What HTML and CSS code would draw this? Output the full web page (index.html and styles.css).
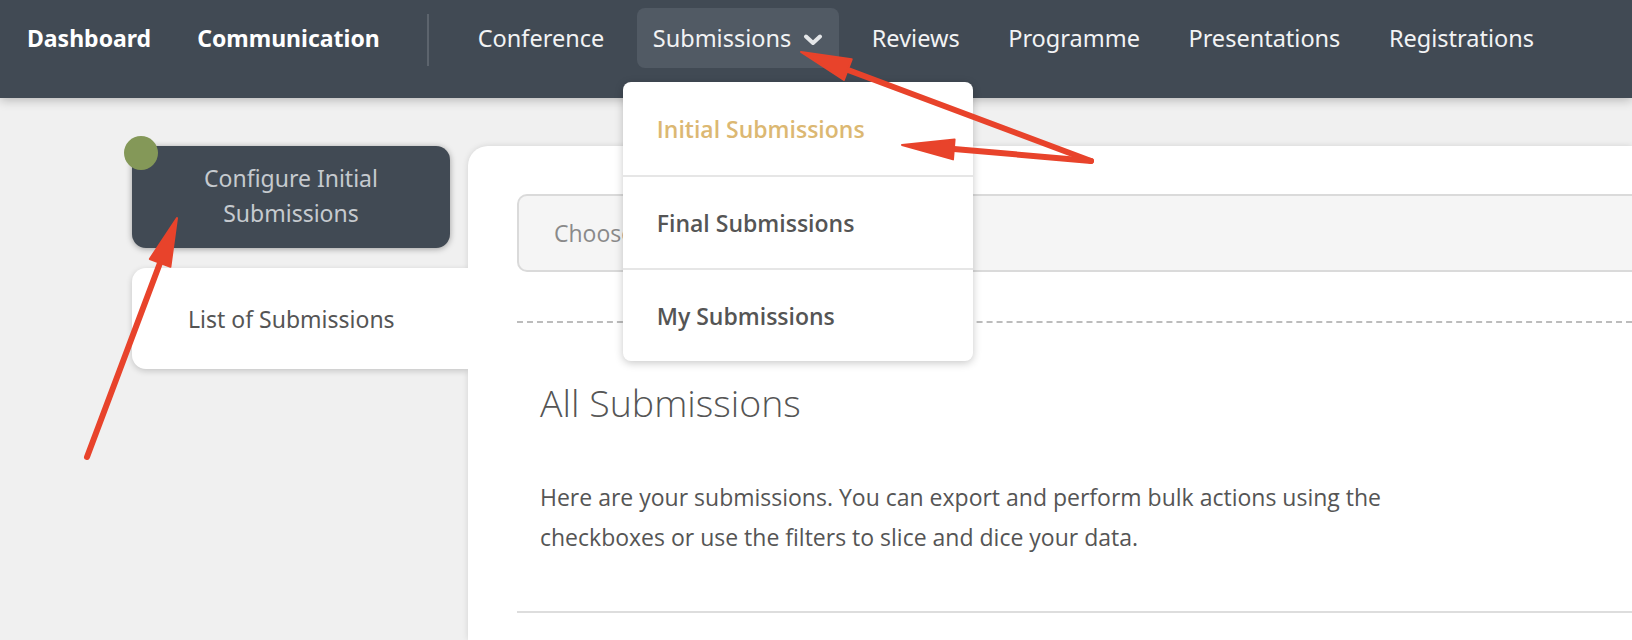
FILE: index.html
```html
<!DOCTYPE html>
<html lang="en">
<head>
<meta charset="utf-8">
<title>Submissions</title>
<link rel="stylesheet" href="styles.css">
</head>
<body>
<header class="topbar">
  <nav class="nav-primary">
    <a class="nav-strong">Dashboard</a>
    <a class="nav-strong">Communication</a>
  </nav>
  <span class="nav-divider"></span>
  <nav class="nav-secondary">
    <a class="nav-item">Conference</a>
    <div class="nav-item nav-item-open">
      <span>Submissions</span>
      <svg class="chevron" width="20" height="12" viewBox="0 0 20 12"><polyline points="3,2.5 10,9 17,2.5" fill="none" stroke="#e4e6e8" stroke-width="4" stroke-linecap="round" stroke-linejoin="round"/></svg>
      <ul class="dropdown">
        <li class="dropdown-item dropdown-item-active">Initial Submissions</li>
        <li class="dropdown-item">Final Submissions</li>
        <li class="dropdown-item">My Submissions</li>
      </ul>
    </div>
    <a class="nav-item">Reviews</a>
    <a class="nav-item">Programme</a>
    <a class="nav-item">Presentations</a>
    <a class="nav-item">Registrations</a>
  </nav>
</header>

<div class="layout">
  <aside class="sidebar">
    <div class="config-card">
      <span class="status-dot"></span>
      Configure Initial<br>Submissions
    </div>
    <div class="list-card">List of Submissions</div>
  </aside>
  <main class="panel">
    <div class="select-box">Choose a form</div>
    <div class="dashed-rule"></div>
    <section class="intro">
      <h2 class="intro-title">All Submissions</h2>
      <p class="intro-text">Here are your submissions. You can export and perform bulk actions using the checkboxes or use the filters to slice and dice your data.</p>
    </section>
    <div class="solid-rule"></div>
  </main>
</div>

<svg class="annotations" width="1632" height="640" viewBox="0 0 1632 640">
  <g stroke="#e8432b" stroke-width="6" stroke-linecap="round" fill="none">
    <line x1="87" y1="457" x2="160" y2="263"/>
    <line x1="1091" y1="161" x2="848" y2="70"/>
    <line x1="1091" y1="161" x2="954" y2="149"/>
  </g>
  <g fill="#e8432b" stroke="#e8432b" stroke-width="2" stroke-linejoin="round">
    <polygon points="177,218 170.4,266.8 149.8,259"/>
    <polygon points="801,52 843.9,79.9 851.7,59.3"/>
    <polygon points="902,145 953,159.4 954.6,139.4"/>
  </g>
</svg>
</body>
</html>
```

FILE: styles.css
```css
* { box-sizing: border-box; }

html, body {
  margin: 0;
  padding: 0;
}

body {
  width: 1632px;
  height: 640px;
  overflow: hidden;
  background: #f0f0f0;
  font-family: "Open Sans", "Noto Sans", sans-serif;
  position: relative;
}

.topbar {
  height: 98px;
  background: #414a54;
  display: flex;
  align-items: flex-start;
  padding: 8px 0 0 27px;
  box-shadow: 0 2px 10px rgba(0, 0, 0, 0.25);
  position: relative;
  z-index: 5;
  font-family: "Noto Sans", "Open Sans", sans-serif;
}

.nav-primary {
  display: flex;
  gap: 46px;
  height: 60px;
  align-items: center;
}

.nav-strong {
  color: #ffffff;
  font-weight: 700;
  font-size: 23px;
}

.nav-divider {
  width: 2px;
  height: 52px;
  background: #5c646d;
  margin: 6px 33px 0 47px;
}

.nav-secondary {
  display: flex;
  gap: 16.5px;
}

.nav-item {
  height: 60px;
  padding: 0 16px;
  display: flex;
  align-items: center;
  color: #f2f3f4;
  font-size: 23.5px;
  border-radius: 8px;
}

.nav-item-open {
  background: #515a64;
  position: relative;
}

.chevron {
  margin-left: 12px;
  margin-top: 4px;
}

.dropdown {
  position: absolute;
  left: -14px;
  top: 74px;
  width: 350px;
  margin: 0;
  padding: 0;
  list-style: none;
  background: #ffffff;
  border-radius: 8px;
  box-shadow: 0 2px 8px rgba(0, 0, 0, 0.22);
  font-family: "Open Sans", sans-serif;
  z-index: 10;
}

.dropdown-item {
  height: 93px;
  display: flex;
  align-items: center;
  padding-left: 34px;
  font-size: 23px;
  font-weight: 600;
  color: #555555;
  border-top: 2px solid #e6e6e6;
}

.dropdown-item:first-child {
  border-top: none;
}

.dropdown-item-active {
  color: #dcb872;
}

.layout {
  display: flex;
  gap: 18px;
  padding: 48px 0 0 132px;
  height: 542px;
}

.sidebar {
  width: 318px;
  flex: none;
  display: flex;
  flex-direction: column;
  gap: 20px;
  font-family: "Noto Sans", "Open Sans", sans-serif;
}

.config-card {
  position: relative;
  height: 102px;
  background: #414a54;
  border-radius: 14px;
  box-shadow: 0 1px 6px rgba(0, 0, 0, 0.35);
  color: #c6cacf;
  font-size: 23px;
  line-height: 35px;
  text-align: center;
  padding-top: 15px;
}

.status-dot {
  position: absolute;
  left: -8px;
  top: -10px;
  width: 34px;
  height: 34px;
  border-radius: 50%;
  background: #849858;
}

.list-card {
  position: relative;
  z-index: 2;
  width: 336px;
  height: 101px;
  background: #ffffff;
  border-radius: 14px 0 0 14px;
  box-shadow: 0 2px 6px rgba(0, 0, 0, 0.18);
  clip-path: inset(-12px 0 -12px -12px);
  display: flex;
  align-items: center;
  padding-left: 56px;
  color: #555555;
  font-size: 23px;
}

.panel {
  flex: 1;
  background: #ffffff;
  border-top-left-radius: 20px;
  box-shadow: 0 0 6px rgba(0, 0, 0, 0.12);
  padding: 48px 0 0 49px;
}

.select-box {
  height: 78px;
  background: #f5f5f5;
  border: 2px solid #dadada;
  border-right: none;
  border-radius: 10px 0 0 10px;
  display: flex;
  align-items: center;
  padding-left: 35px;
  color: #8a8a8a;
  font-size: 23px;
}

.dashed-rule {
  margin-top: 49px;
  border-top: 2px dashed #bcbcbc;
}

.intro {
  padding-left: 23px;
}

.intro-title {
  margin: 58px 0 0;
  font-size: 37.5px;
  font-weight: 300;
  line-height: 44px;
  color: #555555;
}

.intro-text {
  margin: 52px 0 0;
  max-width: 940px;
  font-size: 23px;
  line-height: 40px;
  color: #555555;
}

.solid-rule {
  margin-top: 54px;
  border-top: 2px solid #dddddd;
}

.annotations {
  position: absolute;
  left: 0;
  top: 0;
  z-index: 20;
  pointer-events: none;
}
```
